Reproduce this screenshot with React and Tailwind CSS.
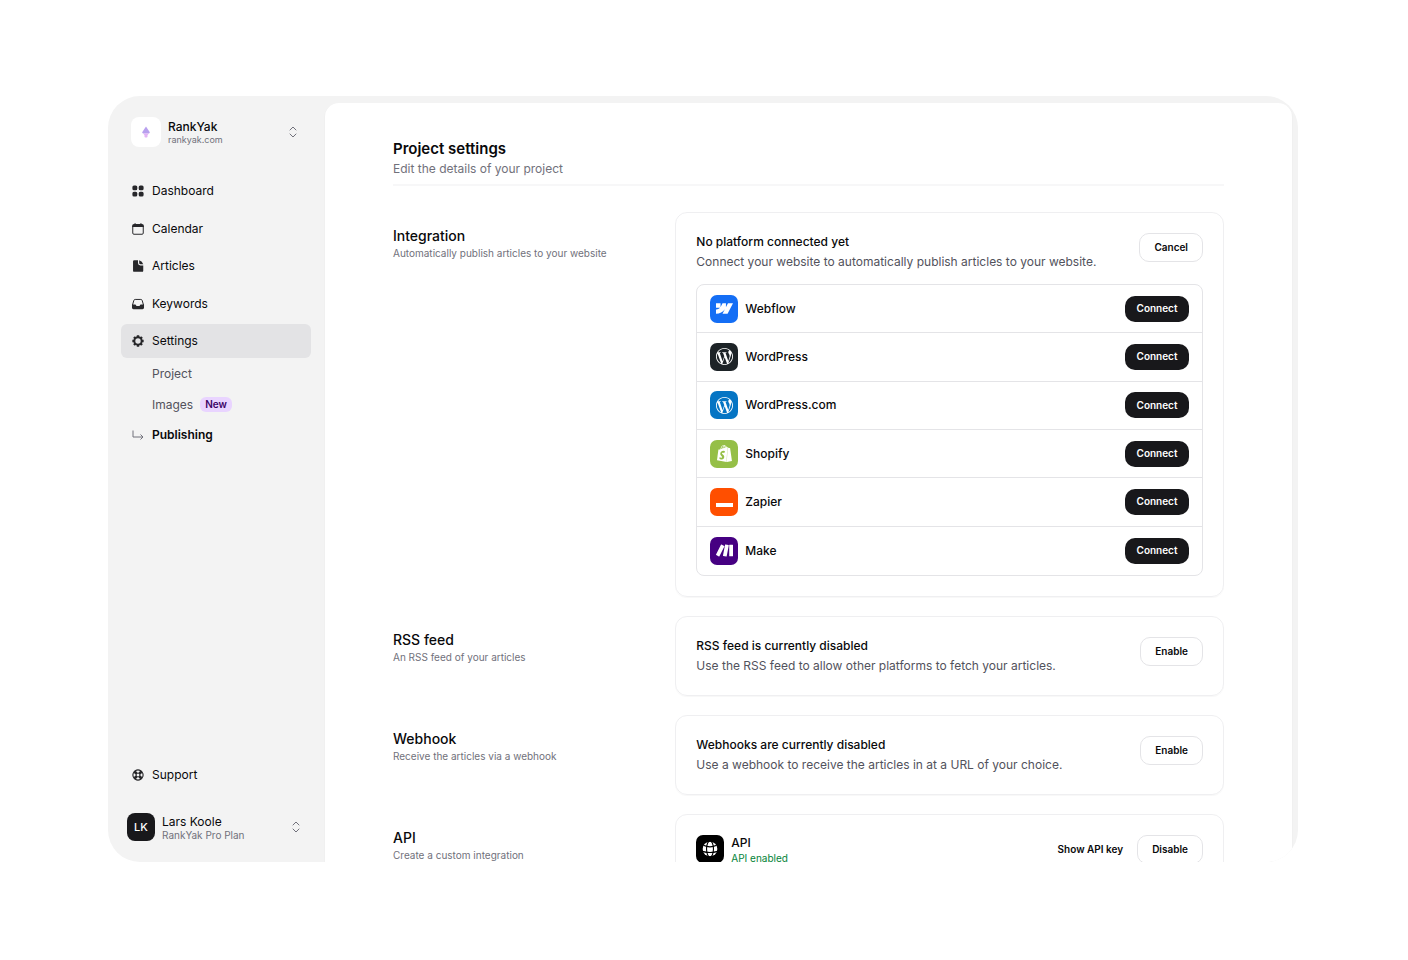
import React, { useState } from 'react';
import { HiMiniLifebuoy, HiMiniSquares2X2 } from 'react-icons/hi2';
import { SiMake, SiShopify, SiWebflow, SiWordpress } from 'react-icons/si';

const CalendarIcon = ({ className }) => (
  <svg viewBox="0 0 24 24" fill="none" className={className}>
    <path d="M3 7h18v12a2 2 0 0 1-2 2H5a2 2 0 0 1-2-2z" stroke="currentColor" strokeWidth="1.7" />
    <path d="M2 8.500V6.500a3 3 0 0 1 3-3h1V2h2v1.500h8V2h2v1.500h1a3 3 0 0 1 3 3v2z" fill="currentColor" />
  </svg>
);

const DocumentIcon = ({ className }) => (
  <svg viewBox="0 0 24 24" fill="currentColor" className={className}>
    <path d="M5.500 2H12v5a4 4 0 0 0 4 4h5v9a2 2 0 0 1-2 2H5.500a2 2 0 0 1-2-2V4a2 2 0 0 1 2-2z" />
    <path d="M14 2.300q5.500 2 7 6.900h-4.500A2.500 2.500 0 0 1 14 6.700z" />
  </svg>
);

const InboxIcon = ({ className }) => (
  <svg viewBox="0 0 24 24" fill="none" className={className}>
    <path
      d="M2.500 14L4.800 6a2.500 2.500 0 0 1 2.400-1.800h9.600A2.500 2.500 0 0 1 19.200 6l2.300 8"
      stroke="currentColor"
      strokeWidth="1.7"
    />
    <path
      d="M1.700 13H7.500q.6 0 .9.600l.7 1.400q.3.600 1 .600h3.800q.7 0 1-.600l.7-1.400q.3-.600.9-.600h5.800v5.500a2.500 2.500 0 0 1-2.500 2.500H4.200a2.500 2.500 0 0 1-2.500-2.500z"
      fill="currentColor"
    />
  </svg>
);

const GearIcon = ({ className }) => (
  <svg viewBox="-1 -1 26 26" fill="none" stroke="currentColor" className={className}>
    <circle cx="12" cy="12" r="6.800" strokeWidth="3.600" />
    <path
      d="M12 1.500v4M12 18.500v4M1.500 12h4M18.500 12h4M4.600 4.600l2.800 2.800M16.600 16.600l2.800 2.800M19.400 4.600l-2.800 2.800M7.400 16.600l-2.800 2.800"
      strokeWidth="4.500"
    />
  </svg>
);

const GlobeIcon = ({ className }) => (
  <svg viewBox="0 0 24 24" fill="none" className={className}>
    <circle cx="12" cy="12" r="11" fill="currentColor" />
    <g stroke="#000" strokeWidth="1.700">
      <ellipse cx="12" cy="12" rx="5.200" ry="12" />
      <path d="M2 6.500q10 4.500 20 0M.5 15.500q11.500 3.500 23 0" />
    </g>
  </svg>
);

const ChevronUpDown = () => (
  <svg viewBox="0 0 8 12" fill="none" className="h-3 w-2 text-zinc-500">
    <path
      d="M1 4l3-3 3 3M1 8l3 3 3-3"
      stroke="currentColor"
      strokeWidth="1"
      strokeLinecap="round"
      strokeLinejoin="round"
    />
  </svg>
);

const CornerArrow = ({ className }) => (
  <svg viewBox="0 0 12 12" fill="none" className={className}>
    <path d="M1 1.500v6.500h10M8.500 5.500L11 8l-2.500 2.500" stroke="currentColor" strokeWidth="1" />
  </svg>
);

const ProjectLogo = () => (
  <svg viewBox="0 0 10 12" className="h-3 w-2.5">
    <path d="M5 .5L8.800 6.300Q9 7.400 7.800 7.400H2.200Q1 7.400 1.200 6.300z" fill="#b8a0ee" />
    <path d="M2.200 7.400h5.600L6.500 9.200V11q-1.500 1-3 0V9.200z" fill="#e3b3f5" />
  </svg>
);

const ZapierIcon = ({ className }) => (
  <svg viewBox="0 0 17 17" className={className}>
    <rect y="10" width="17" height="4" fill="currentColor" />
  </svg>
);

const navItems = [
  { label: 'Dashboard', icon: HiMiniSquares2X2 },
  { label: 'Calendar', icon: CalendarIcon },
  { label: 'Articles', icon: DocumentIcon },
  { label: 'Keywords', icon: InboxIcon },
  { label: 'Settings', icon: GearIcon, active: true },
];

const platforms = [
  { name: 'Webflow', icon: SiWebflow, color: 'bg-[#146ef5]' },
  { name: 'WordPress', icon: SiWordpress, color: 'bg-[#1d2327]' },
  { name: 'WordPress.com', icon: SiWordpress, color: 'bg-[#0675c4]' },
  { name: 'Shopify', icon: SiShopify, color: 'bg-[#95bf47]' },
  { name: 'Zapier', icon: ZapierIcon, color: 'bg-[#ff4f00]' },
  { name: 'Make', icon: SiMake, color: 'bg-[#460082]' },
];

const NavItem = ({ label, icon: Icon, active }) => (
  <a
    href="#"
    className={`flex h-[34px] shrink-0 items-center gap-[7px] rounded-md px-2.5 text-[12px] ${
      active ? 'bg-[#e3e3e5]' : 'hover:bg-zinc-200'
    }`}
  >
    <Icon className="size-3.5 text-zinc-800" />
    {label}
  </a>
);

const OutlineButton = ({ children, ...props }) => (
  <button
    className="h-[29px] shrink-0 rounded-[10px] border border-zinc-200 bg-white px-[14px] text-[10px] font-semibold hover:bg-zinc-50"
    {...props}
  >
    {children}
  </button>
);

const Section = ({ title, description, children }) => (
  <section className="grid grid-cols-3 gap-4">
    <div className="pt-[15px]">
      <h2 className="text-[14px] leading-[18px] font-medium">{title}</h2>
      <p className="text-[10px] leading-4 text-zinc-500">{description}</p>
    </div>
    <div className="col-span-2 rounded-xl border border-zinc-200/60 px-5 pt-5 pb-[19px] shadow-[0_1px_1px_rgba(0,0,0,0.03)]">
      {children}
    </div>
  </section>
);

const CardHeader = ({ title, description, action }) => (
  <div className="flex items-start justify-between">
    <div>
      <h3 className="text-[12px] leading-[18px] font-medium">{title}</h3>
      <p className="mt-px text-[12px] leading-5 text-zinc-600">{description}</p>
    </div>
    {action}
  </div>
);

const Sidebar = () => (
  <aside className="flex w-[217px] shrink-0 flex-col pr-[14px] pl-[13px]">
    <button className="mt-[21px] flex items-center gap-[7px] pr-[14px] pl-[10px] text-left">
      <span className="flex size-[30px] items-center justify-center rounded-lg bg-white">
        <ProjectLogo />
      </span>
      <span className="flex-1">
        <span className="block text-[12px] leading-[15px] font-medium">RankYak</span>
        <span className="block text-[9px] leading-3 text-zinc-500">rankyak.com</span>
      </span>
      <ChevronUpDown />
    </button>

    <nav className="mt-[27px]">
      <div className="flex h-46 flex-col justify-between">
        {navItems.map((item) => (
          <NavItem key={item.label} {...item} />
        ))}
      </div>
      <div className="text-[12px] text-zinc-600">
        <a href="#" className="flex h-[31px] items-center pl-[31px]">
          Project
        </a>
        <a href="#" className="flex h-[31px] items-center gap-[7px] pl-[31px]">
          Images
          <span className="rounded-md bg-[#e9d4ff] px-[5px] text-[10px] leading-[15px] font-semibold text-[#3c0366]">
            New
          </span>
        </a>
        <a href="#" className="flex h-[30px] items-center gap-2 pl-[11px] font-semibold text-zinc-950">
          <CornerArrow className="size-3 text-zinc-500" />
          Publishing
        </a>
      </div>
    </nav>

    <div className="mt-auto mb-[21px]">
      <NavItem label="Support" icon={HiMiniLifebuoy} />
      <button className="mt-[21px] flex w-full items-center gap-[7px] pr-[11px] pl-[6px] text-left">
        <span className="flex size-7 items-center justify-center rounded-lg bg-zinc-900 text-[11px] font-medium text-white">
          LK
        </span>
        <span className="flex-1">
          <span className="block text-[12px] leading-[15px]">Lars Koole</span>
          <span className="block text-[10px] leading-3 text-zinc-500">RankYak Pro Plan</span>
        </span>
        <ChevronUpDown />
      </button>
    </div>
  </aside>
);

const App = () => {
  const [connected, setConnected] = useState([]);

  const toggle = (name) => {
    setConnected((prev) => (prev.includes(name) ? prev.filter((n) => n !== name) : [...prev, name]));
  };

  return (
    <div className="h-screen bg-white pt-24 pr-[110px] pb-[98px] pl-[108px] font-['Inter',sans-serif] text-zinc-950">
      <div className="flex h-full overflow-hidden rounded-[32px] bg-[#f3f3f3]">
        <Sidebar />

        <main className="mt-[7px] mr-[6px] flex-1 overflow-hidden rounded-t-[14px] bg-white px-17 pt-9 shadow-xs">
          <header className="border-b-2 border-zinc-100/70 pb-[5px]">
            <h1 className="text-[15px] leading-5 font-semibold">Project settings</h1>
            <p className="text-[12px] leading-5 text-zinc-500">Edit the details of your project</p>
          </header>

          <div className="mt-[26px] flex flex-col gap-[19px]">
            <Section title="Integration" description="Automatically publish articles to your website">
              <CardHeader
                title="No platform connected yet"
                description="Connect your website to automatically publish articles to your website."
                action={<OutlineButton>Cancel</OutlineButton>}
              />
              <ul className="mt-3 mb-px grid h-[292px] auto-rows-fr divide-y divide-zinc-200 rounded-lg border border-zinc-200">
                {platforms.map(({ name, icon: Icon, color }) => (
                  <li key={name} className="flex items-center gap-[7px] px-[13px]">
                    <span className={`flex size-7 items-center justify-center rounded-[7px] text-white ${color}`}>
                      <Icon className="size-[17px]" />
                    </span>
                    <span className="flex-1 text-[12px] font-medium">{name}</span>
                    <button
                      onClick={() => toggle(name)}
                      className="h-[26px] min-w-16 rounded-[10px] bg-zinc-900 px-[11px] text-[10px] font-semibold text-white hover:bg-zinc-700"
                    >
                      {connected.includes(name) ? 'Disconnect' : 'Connect'}
                    </button>
                  </li>
                ))}
              </ul>
            </Section>

            <Section title="RSS feed" description="An RSS feed of your articles">
              <CardHeader
                title="RSS feed is currently disabled"
                description="Use the RSS feed to allow other platforms to fetch your articles."
                action={<OutlineButton>Enable</OutlineButton>}
              />
            </Section>

            <Section title="Webhook" description="Receive the articles via a webhook">
              <CardHeader
                title="Webhooks are currently disabled"
                description="Use a webhook to receive the articles in at a URL of your choice."
                action={<OutlineButton>Enable</OutlineButton>}
              />
            </Section>

            <Section title="API" description="Create a custom integration">
              <div className="flex items-start gap-[7px]">
                <span className="flex size-7 items-center justify-center rounded-[7px] bg-black text-white">
                  <GlobeIcon className="size-4" />
                </span>
                <div className="flex-1">
                  <h3 className="text-[12px] leading-4 font-medium">API</h3>
                  <p className="text-[10px] leading-[14px] text-green-700">API enabled</p>
                </div>
                <div className="flex items-center gap-[14px]">
                  <button className="text-[10px] font-semibold">Show API key</button>
                  <OutlineButton>Disable</OutlineButton>
                </div>
              </div>
            </Section>
          </div>
        </main>
      </div>
    </div>
  );
};

export default App;
